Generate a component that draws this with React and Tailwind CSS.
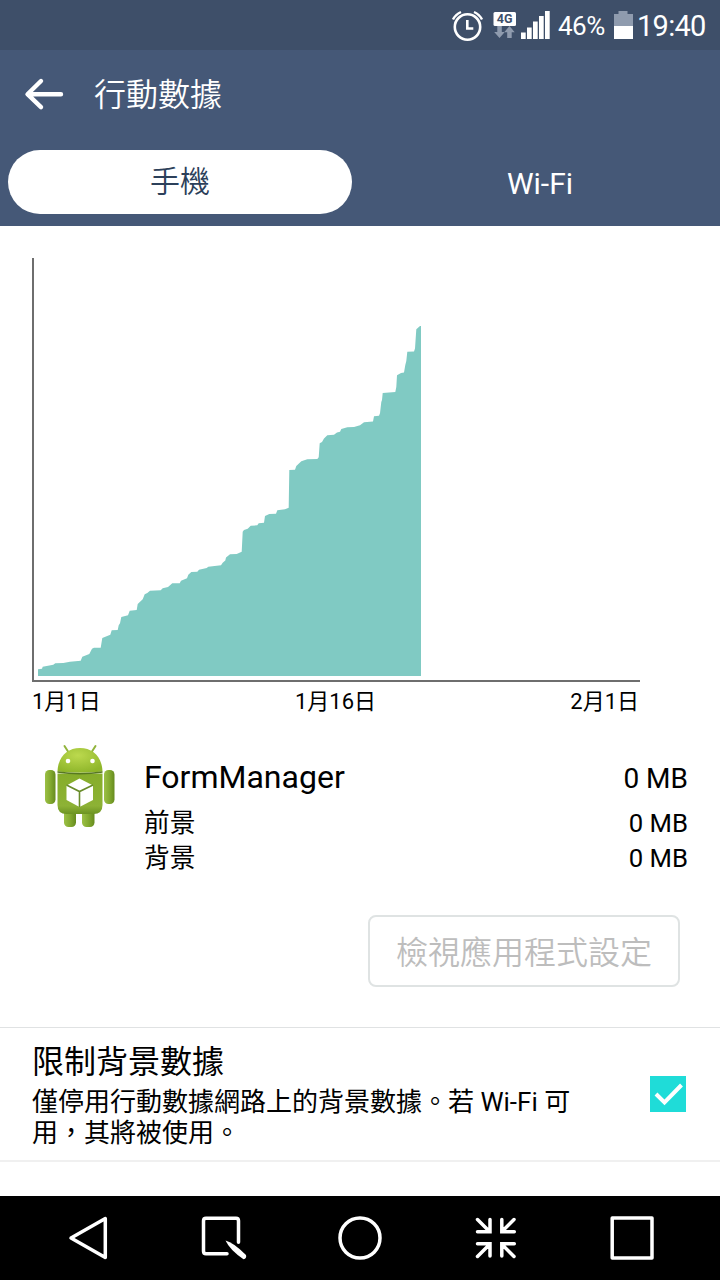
import React from 'react';

const font = "font-['Roboto','Noto_Sans_CJK_TC',sans-serif]";

const usage = [
  [38, 669.3], [42, 668.7], [42.7, 666.7], [53.3, 664.7], [55.3, 663.3], [63.3, 663], [70, 661.7], [80.7, 660.7],
  [82.3, 656.7], [89.3, 654], [92, 648.7], [94, 647.7], [100.7, 647.7], [102.3, 638], [110.3, 634.7], [111.7, 630.3],
  [117.7, 630], [118.7, 625.3], [120, 623.3], [121.3, 617], [128, 615.3], [129.7, 610.7], [136.7, 610], [137.7, 604],
  [142.7, 599.3], [144.7, 594.3], [147.3, 593], [150, 590.7], [160.7, 590.3], [162.7, 588.3], [168, 587], [172.3, 583.3],
  [179.7, 583.3], [181, 580.7], [187, 578.3], [188.3, 574.7], [191.3, 572], [197.3, 571.7], [199, 569.7], [206.7, 568],
  [208.3, 566.7], [221, 565.3], [222.7, 562.7], [225.3, 560.5], [226, 557.5], [230, 554.3], [236.7, 554], [241.7, 551.7],
  [242.7, 531.7], [244, 530], [247.7, 528.7], [250.7, 525.7], [257.3, 525.3], [258.7, 523.3], [264, 522.7], [265, 516],
  [269.3, 514], [276, 513.7], [277.3, 510.3], [285, 509.3], [288.7, 507.7], [289.3, 470], [295, 469.7], [296.3, 466],
  [301.3, 461.3], [307.3, 459.3], [317.3, 459], [318.7, 457.3], [319.7, 443.3], [322, 442], [324, 438.5], [327.3, 435.3],
  [334, 434.7], [337, 432.5], [340, 431.7], [341.3, 429], [347.3, 427.3], [354, 427], [360, 425.3], [364, 422.3],
  [373, 421.5], [374, 416.3], [379, 415.7], [380, 413.3], [381.3, 402], [382, 400], [382.7, 393], [395.3, 392],
  [396.3, 387], [397, 375.3], [401, 373], [404, 372.5], [405.3, 365], [406.3, 361], [407.3, 351.7], [414, 351.5],
  [415, 348.5], [416.3, 329.3], [420, 326], [421, 326],
];

const detailRows = [
  { label: '前景', value: '0 MB' },
  { label: '背景', value: '0 MB' },
];

function StatusBar() {
  return (
    <div className="flex h-[50px] items-center bg-[#3e4f69] pl-[450px] text-white">
      <svg className="h-[50px] w-[104px] shrink-0" viewBox="450 0 104 50" fill="none">
        <circle cx="467.5" cy="27" r="12.7" stroke="#fff" strokeWidth="2.6" />
        <path d="M467.3 20v8.5h6" stroke="#fff" strokeWidth="2.6" />
        <path d="M453 19.5q2.5-5 8-7.5M482 19.5q-2.5-5-8-7.5" stroke="#fff" strokeWidth="2.4" />
        <rect x="493.5" y="12" width="22.5" height="14" rx="1.5" fill="#fff" />
        <text x="504.7" y="23.3" textAnchor="middle" fontSize="12.5" fontWeight="700" fill="#3e4f69" fontFamily="Roboto">4G</text>
        <path d="M497.3 26h4.5v6h3l-5.300 6-5.300-6h3.100zM507.200 38h4.500v-5.700h3L509.500 26l-5.300 6.300h3z" fill="#8f9bae" />
        <path d="M521 32.5h4.700V39H521zM527 27.500h4.700V39H527zM533 21.500h4.700V39H533zM539 16h4.700v23H539zM545 11h4.700v28H545z" fill="#fff" />
      </svg>
      <span className="ml-[4px] w-[56px] shrink-0 whitespace-nowrap pt-[2px] text-[26px] leading-none tracking-[-0.5px]">46%</span>
      <svg className="h-[50px] w-[20px] shrink-0" viewBox="614 0 20 50">
        <path d="M618.5 11h9v3h5.500v12h-19V14h4.500z" fill="#8f9bae" />
        <path d="M614 26h19v13h-19z" fill="#fff" />
      </svg>
      <span className="ml-[3px] whitespace-nowrap pt-[2px] text-[29px] leading-none tracking-[-0.7px]">19:40</span>
    </div>
  );
}

function Header() {
  return (
    <header className="h-[176px] bg-[#455877] text-white">
      <div className="flex h-[88px] items-center pl-6">
        <svg className="h-10 w-10" viewBox="0 0 40 40" fill="none" stroke="#fff" strokeWidth="4.4" strokeLinecap="round" strokeLinejoin="round">
          <path d="M17 7L3.5 20.2 17 33.2M4 20.2h33" />
        </svg>
        <h1 className="ml-[30px] pt-px text-[32px] leading-none font-[350]">行動數據</h1>
      </div>
      <div className="flex px-2 pt-3">
        <div className="flex h-16 w-[344px] items-center justify-center rounded-full bg-white text-[30px] leading-none font-[350] text-[#2c405a]">
          手機
        </div>
        <div className="ml-4 flex h-16 w-[344px] items-center justify-center pt-[3px] text-[30px] leading-none">Wi-Fi</div>
      </div>
    </header>
  );
}

function UsageChart() {
  const line = usage.map(([x, y]) => `${x},${y}`).join(' ');
  return (
    <div className="px-8 pt-8">
      <svg className="block h-[424px] w-[608px]" viewBox="32 258 608 424">
        <polygon points={`38,676 ${line} 421,676`} fill="#80cac3" />
        <path d="M33 258v423h607" fill="none" stroke="#6e6e6e" strokeWidth="2" />
      </svg>
      <div className="flex h-[38px] w-[607px] items-center justify-between pt-[2px] text-[22px] leading-none">
        <span>1月1日</span>
        <span>1月16日</span>
        <span>2月1日</span>
      </div>
    </div>
  );
}

function AndroidIcon() {
  return (
    <svg className="h-[90px] w-[80px]" viewBox="40 740 80 90">
      <defs>
        <linearGradient id="body" x1="0" y1="0" x2="0" y2="1">
          <stop offset="0" stopColor="#86ad2a" />
          <stop offset="0.8" stopColor="#8db235" />
          <stop offset="1" stopColor="#6c9322" />
        </linearGradient>
        <linearGradient id="limb" x1="0" y1="0" x2="1" y2="0">
          <stop offset="0" stopColor="#9cc046" />
          <stop offset="0.5" stopColor="#84ab30" />
          <stop offset="1" stopColor="#668b1e" />
        </linearGradient>
        <radialGradient id="head" cx="0.45" cy="0.3" r="0.7">
          <stop offset="0" stopColor="#bcd94e" />
          <stop offset="1" stopColor="#8fb62b" />
        </radialGradient>
      </defs>
      <path d="M64.5 746l4.5 7M95.5 746l-4.5 7" stroke="#91b43b" strokeWidth="2" strokeLinecap="round" />
      <rect x="64" y="804" width="12" height="23" rx="4.5" fill="url(#limb)" />
      <rect x="82" y="804" width="12.5" height="23" rx="4.5" fill="url(#limb)" />
      <rect x="45" y="770" width="10.5" height="34" rx="4.5" fill="url(#limb)" />
      <rect x="104" y="770" width="10.5" height="34" rx="4.5" fill="url(#limb)" />
      <path d="M57.5 773.5h45V805q0 9-9 9h-27q-9 0-9-9z" fill="url(#body)" />
      <path d="M57.5 771.5C58 757 67 748 80 748s22 9 22.500 23.500q-22.500 2.500-45 0z" fill="url(#head)" />
      <path d="M57.5 772q22.5 3.5 45 0" fill="none" stroke="#577821" strokeWidth="1.4" />
      <circle cx="68" cy="761" r="2.3" fill="#fff" />
      <circle cx="92.5" cy="761" r="2.3" fill="#fff" />
      <path d="M79.5 778.5L93 785.5v14.500l-13.500 7L66.500 800v-14.500z" fill="#fff" />
      <path d="M66.5 785l13 6.500L93 785M79.500 791.500V807" fill="none" stroke="#698c2a" strokeWidth="1.6" />
    </svg>
  );
}

function AppUsage() {
  return (
    <section className="flex h-[195px] pt-5 pr-8 pl-10">
      <AndroidIcon />
      <div className="ml-[24px] flex-1 pt-[18px]">
        <div className="flex h-10 items-center justify-between leading-none">
          <span className="pb-[2px] text-[32px]">FormManager</span>
          <span className="pt-px text-[28px]">0 MB</span>
        </div>
        <div className="pt-[8px]">
          {detailRows.map((row) => (
            <div key={row.label} className="flex h-[35px] items-center justify-between text-[25.7px] leading-none">
              <span>{row.label}</span>
              <span>{row.value}</span>
            </div>
          ))}
        </div>
      </div>
    </section>
  );
}

function RestrictRow() {
  return (
    <section className="flex h-[135px] items-center border-t border-b-2 border-t-[#e0e2e3] border-b-[#f0f0f0] pr-[34px] pl-8">
      <div className="w-[560px] pt-[4px]">
        <div className="text-[32px] leading-[38px]">限制背景數據</div>
        <div className="pt-[6px] text-[26px] leading-[31px]">
          僅停用行動數據網路上的背景數據。若 Wi-Fi 可<br />用，其將被使用。
        </div>
      </div>
      <div className="ml-auto h-9 w-9 bg-[#1fdcd8]">
        <svg className="h-9 w-9" viewBox="0 0 36 36" fill="none">
          <path d="M6 18l8.5 8.5L31.5 9" stroke="#fff" strokeWidth="4" />
        </svg>
      </div>
    </section>
  );
}

function NavBar() {
  return (
    <nav className="mt-auto h-[84px] bg-black">
      <svg className="block h-[84px] w-[720px]" viewBox="0 1196 720 84" fill="none" stroke="#fff" strokeWidth="3.5">
        <path d="M105.3 1218.5v39L71 1238z" strokeLinejoin="round" />
        <path d="M227 1253.7H206q-2.5 0-2.500-2.500v-30.500q0-2.500 2.500-2.500h30q2.500 0 2.500 2.500v21.500" strokeLinecap="round" />
        <path d="M225.5 1240.5q8 2 20.500 14.500 1 3.500-2.500 4.200-13.500-9-18-18.700z" fill="#fff" stroke="none" />
        <circle cx="360" cy="1238" r="20" />
        <path
          d="M477.5 1219.5l12 12M490 1219.5v12.3h-12.5M514 1219.5l-12 12M501.8 1219.5v12.3h12.5M477.5 1256.5l12-12M490 1256v-12.2h-12.5M514 1256.5l-12-12M501.8 1256v-12.2h12.5"
          strokeLinecap="round"
        />
        <rect x="612.2" y="1218" width="39.8" height="40" strokeLinejoin="round" />
      </svg>
    </nav>
  );
}

export default function App() {
  return (
    <div className={`flex h-[1280px] w-[720px] flex-col overflow-hidden bg-white text-black ${font}`} lang="zh-TW">
      <StatusBar />
      <Header />
      <UsageChart />
      <AppUsage />
      <div className="flex h-28 justify-end pr-10">
        <button className="h-[72px] w-[312px] rounded-lg border-2 border-[#dfe3e3] pt-[4px] text-[32px] leading-none font-[350] text-[#bdbdbd]">
          檢視應用程式設定
        </button>
      </div>
      <RestrictRow />
      <NavBar />
    </div>
  );
}
